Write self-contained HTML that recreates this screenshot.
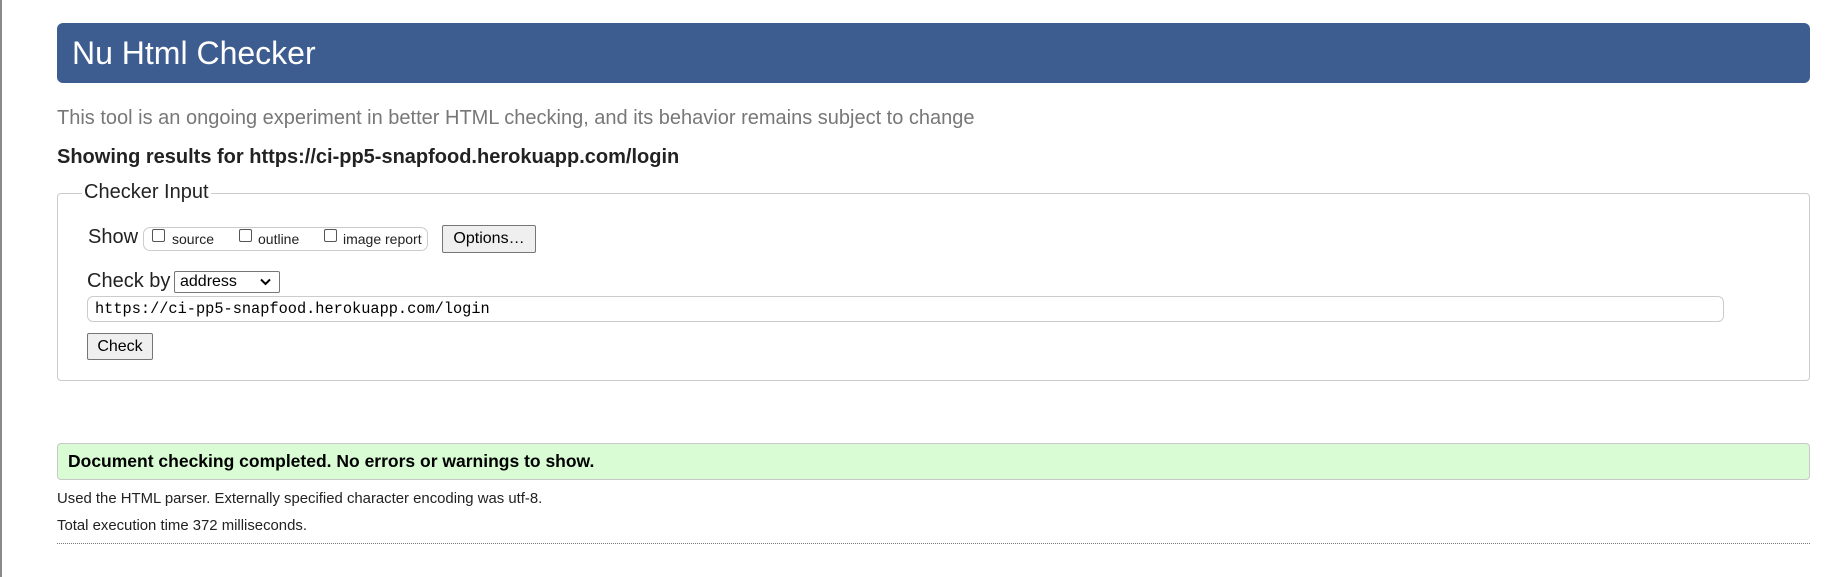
<!DOCTYPE html>
<html><head><meta charset="utf-8"><style>
*{box-sizing:border-box;margin:0;padding:0}
body{width:1836px;height:577px;background:#fff;font-family:"Liberation Sans",Arial,sans-serif;color:#000;position:relative;overflow:hidden}
.a{position:absolute;white-space:nowrap}
.lb{position:absolute;left:0;top:0;width:2px;height:577px;background:#8a8a8a}
.hdr{left:57px;top:23px;width:1753px;height:60px;background:#3d5c8f;border-radius:6px;color:#fff;font-size:32px;line-height:60px;padding-left:15px}
.cb{width:13px;height:13px;border:1px solid #555;border-radius:2px;background:#fff}
.btn{background:#efefef;border:1px solid #767676;border-radius:2px;font-size:16px;text-align:center}
</style></head><body>
<div class="lb"></div>
<div class="a hdr">Nu Html Checker</div>
<div class="a" style="left:57px;top:107px;font-size:20px;color:#777">This tool is an ongoing experiment in better HTML checking, and its behavior remains subject to change</div>
<div class="a" style="left:57px;top:146px;font-size:20px;font-weight:bold;color:#222">Showing results for https://ci-pp5-snapfood.herokuapp.com/login</div>
<div class="a" style="left:57px;top:193px;width:1753px;height:188px;border:1px solid #ccc;border-radius:4px"></div>
<div class="a" style="left:82px;top:181px;background:#fff;padding:0 2px;font-size:20px;color:#222">Checker Input</div>
<div class="a" style="left:88px;top:226px;font-size:20px;color:#222">Show</div>
<div class="a" style="left:143px;top:227px;width:285px;height:24px;border:1px solid #ccc;border-radius:7px"></div>
<div class="a cb" style="left:152px;top:229px"></div>
<div class="a" style="left:172px;top:231px;font-size:14px;color:#222">source</div>
<div class="a cb" style="left:239px;top:229px"></div>
<div class="a" style="left:258px;top:231px;font-size:14px;color:#222">outline</div>
<div class="a cb" style="left:324px;top:229px"></div>
<div class="a" style="left:343px;top:231px;font-size:14px;color:#222">image report</div>
<div class="a btn" style="left:442px;top:225px;width:94px;height:28px;line-height:26px">Options…</div>
<div class="a" style="left:87px;top:270px;font-size:20px;color:#222">Check by</div>
<div class="a" style="left:174px;top:271px;width:106px;height:22px;border:1px solid #767676;border-radius:2px;font-size:16px;line-height:20px;padding-left:5px">address
<svg style="position:absolute;right:8px;top:6px" width="11" height="8" viewBox="0 0 11 8"><path d="M1 1.5L5.5 6L10 1.5" stroke="#000" stroke-width="2" fill="none"/></svg></div>
<div class="a" style="left:87px;top:296px;width:1637px;height:26px;border:1px solid #ccc;border-radius:6px;font-family:'Liberation Mono',monospace;font-size:15.3px;line-height:24px;padding-left:7px">https://ci-pp5-snapfood.herokuapp.com/login</div>
<div class="a btn" style="left:87px;top:333px;width:66px;height:27px;line-height:25px">Check</div>
<div class="a" style="left:57px;top:443px;width:1753px;height:37px;background:#d9fcd4;border:1px solid #c8c8c8;border-radius:4px;font-size:17.5px;font-weight:bold;line-height:35px;padding-left:10px">Document checking completed. No errors or warnings to show.</div>
<div class="a" style="left:57px;top:491px;font-size:14.9px;color:#222">Used the HTML parser. Externally specified character encoding was utf-8.</div>
<div class="a" style="left:57px;top:518px;font-size:14.9px;color:#222">Total execution time 372 milliseconds.</div>
<div class="a" style="left:57px;top:543px;width:1753px;border-top:1px dotted #777"></div>
</body></html>
